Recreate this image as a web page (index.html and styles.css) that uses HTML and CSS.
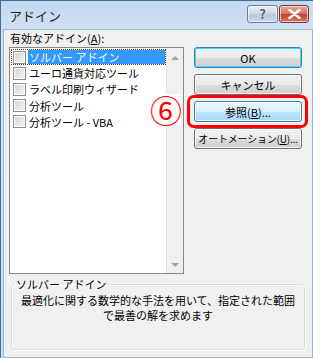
FILE: index.html
```html
<!DOCTYPE html>
<html lang="ja">
<head>
  <meta charset="UTF-8">
  <title>アドイン</title>
  <link rel="stylesheet" href="styles.css">
</head>
<body>

<div class="window">
  <div class="titlebar">
    <span class="title">アドイン</span>
    <div class="caption-buttons">
      <span class="cap-btn help">?</span>
      <span class="cap-btn close">
        <svg width="13" height="10" viewBox="0 0 13 10"><path d="M1.5 1 L11.5 9 M11.5 1 L1.5 9" stroke="#fff" stroke-width="2.6" stroke-linecap="round"/></svg>
      </span>
    </div>
  </div>

  <div class="client">
    <div class="main">
      <div class="left">
        <div class="caption">有効なアドイン(<u>A</u>):</div>
        <div class="listbox">
          <ul class="items">
            <li class="item selected"><span class="check"></span><span class="text">ソルバー アドイン</span></li>
            <li class="item"><span class="check"></span><span class="text">ユーロ通貨対応ツール</span></li>
            <li class="item"><span class="check"></span><span class="text">ラベル印刷ウィザード</span></li>
            <li class="item"><span class="check"></span><span class="text">分析ツール</span></li>
            <li class="item"><span class="check"></span><span class="text">分析ツール - VBA</span></li>
          </ul>
          <div class="scrollbar">
            <span class="arrow up"></span>
            <span class="arrow down"></span>
          </div>
          <span class="step">⑥</span>
        </div>
      </div>

      <div class="buttons">
        <button class="btn default">OK</button>
        <button class="btn">キャンセル</button>
        <button class="btn hot marked">参照(<u>B</u>)...</button>
        <button class="btn">オートメーション(<u>U</u>)...</button>
      </div>
    </div>

    <fieldset class="group">
      <legend>ソルバー アドイン</legend>
      <p>最適化に関する数学的な手法を用いて、指定された範囲<br>で最善の解を求めます</p>
    </fieldset>
  </div>
</div>

</body>
</html>
```

FILE: styles.css
```css
body { margin: 0; width: 313px; height: 358px; overflow: hidden; background: #ffffff; font-family: "Noto Sans CJK JP", "Liberation Sans", sans-serif; font-size: 11px; color: #000; }
.window { width: 316px; height: 361px; box-sizing: border-box; border: 1px solid #4a6d8c; background: linear-gradient(#c3d9ef, #d3e3f4 40px, #c9dcf1); padding: 0 2px 2px 2px; display: flex; flex-direction: column; }

.titlebar { height: 28px; display: flex; align-items: flex-start; justify-content: space-between; }
.title { font-size: 13px; line-height: 13px; margin: 8px 0 0 6px; color: #1e1e1e; }
.caption-buttons { display: flex; gap: 1px; margin: 4px 4px 0 0; }
.cap-btn { height: 16px; border: 1px solid #6b7c90; border-radius: 3px; display: flex; align-items: center; justify-content: center; box-shadow: inset 0 0 0 1px rgba(255,255,255,0.6); }
.help { width: 29px; background: linear-gradient(#e6eef7, #c9d7e7 50%, #b5c7dc 51%, #cbd9ea); color: #4f6178; font-weight: bold; font-size: 13px; line-height: 16px; text-shadow: 0 0 2px #fff; }
.close { width: 28px; border-color: #7a3a32; background: linear-gradient(#e9a99a, #d4705f 50%, #c4412c 51%, #d77a5d); }

.client { flex: 1; background: #f0f0f0; border: 1px solid #9fb5cc; padding: 1px 7px 7px 5px; display: flex; flex-direction: column; }
.main { display: flex; gap: 10px; }
.left { display: flex; flex-direction: column; }
.caption { height: 16px; line-height: 14px; padding-left: 1px; }
.caption u, .btn u { text-decoration-thickness: 1px; text-underline-offset: 1px; }

.listbox { position: relative; width: 175px; height: 227px; box-sizing: border-box; border: 1px solid #828790; background: #fff; display: flex; }
.items { list-style: none; margin: 0; padding: 1px 0 0 1px; flex: 1; }
.item { display: flex; align-items: center; height: 14px; margin-bottom: 0.2px; padding-left: 1px; gap: 2px; border: 1px dotted transparent; }
.item.selected { border-color: #5a3b10; }
.item.selected .text { background: #3399ff; color: #fff; flex: 1; }
.check { width: 11px; height: 11px; border: 1px solid #8f8f8f; background: linear-gradient(135deg, #d4d4d4, #f6f6f6); box-shadow: inset 0 0 0 1px #fff; flex-shrink: 0; }
.text { line-height: 14px; padding-left: 1px; white-space: nowrap; }
.scrollbar { width: 16px; background: #f0f0f0; border-left: 1px solid #e3e3e3; display: flex; flex-direction: column; justify-content: space-between; align-items: center; padding: 8px 0 6px; }
.arrow { width: 0; height: 0; border-left: 4px solid transparent; border-right: 4px solid transparent; }
.arrow.up { border-bottom: 4px solid #a6a6a6; }
.arrow.down { border-top: 4px solid #a6a6a6; }
.step { position: absolute; left: 140px; top: 46px; width: 31px; height: 31px; background: #fff; color: #ff0000; font-family: "Noto Sans CJK JP", sans-serif; font-size: 32px; line-height: 31px; text-align: center; }

.buttons { display: flex; flex-direction: column; gap: 6px; padding-top: 16px; width: 108px; }
.btn { height: 21px; margin: 0; padding: 0; font-family: inherit; font-size: 11px; color: #000; white-space: nowrap; border: 1px solid #707070; border-radius: 3px; background: linear-gradient(#f2f2f2, #ebebeb 50%, #dddddd 51%, #cfcfcf); box-shadow: inset 0 0 0 1px rgba(255,255,255,0.8); }
.btn:last-child { font-size: 10px; letter-spacing: -0.2px; }
.btn.default { border-color: #3c7fb1; box-shadow: inset 0 0 0 1px #48d2fc; }
.btn.hot { border-color: #3c7fb1; background: linear-gradient(#eaf6fd, #d9f0fc 50%, #bee6fd 51%, #a7d9f5); }
.btn.marked { position: relative; }
.btn.marked::after { content: ""; position: absolute; left: -8px; right: -7px; top: -7px; bottom: -7px; border: 3px solid #ff0000; border-radius: 7px; }

.group { margin: 3px 0 0 2px; padding: 0 4px 4px; border: 1px solid #d5dfe5; border-radius: 3px; box-shadow: inset 1px 1px 0 #fff, 1px 1px 0 #fff; flex: 1; min-width: 0; }
.group legend { padding: 0 1px; margin-left: -1px; line-height: 14px; }
.group p { margin: 2px 0 0; text-align: center; line-height: 15px; }
```
